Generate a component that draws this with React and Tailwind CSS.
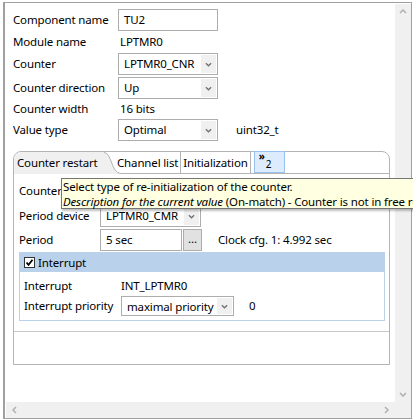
import React from 'react';

const font = { fontFamily: '"Noto Sans", "Open Sans", sans-serif' };

function Chevron({ dir = 'down', className = '' }) {
  // small arrow glyph used by combos and scrollbars
  const paths = {
    down: 'M1 1 L4 4 L7 1',
    up: 'M1 4 L4 1 L7 4',
    left: 'M4 1 L1 4 L4 7',
    right: 'M1 1 L4 4 L1 7',
  };
  const box = dir === 'left' || dir === 'right' ? '0 0 5 8' : '0 0 8 5';
  return (
    <svg viewBox={box} className={className} fill="none" stroke="currentColor" strokeWidth="1.5">
      <path d={paths[dir]} />
    </svg>
  );
}

function Combo({ value, width }) {
  return (
    <div className={`flex h-full border border-[#adadad] bg-white ${width}`}>
      <div className="flex-1 pl-[5px] leading-[20px] whitespace-nowrap overflow-hidden">{value}</div>
      <div className="w-[15px] my-[1px] mr-[1px] flex items-center justify-center bg-[#f0f0f0] text-[#707070]">
        <Chevron className="w-[7px] h-[5px]" />
      </div>
    </div>
  );
}

function Row({ label, labelW, children, h = 'h-[22px]', className = '' }) {
  return (
    <div className={`flex items-center ${h} ${className}`}>
      <div className={`${labelW} shrink-0 whitespace-nowrap`}>{label}</div>
      {children}
    </div>
  );
}

export default function App() {
  return (
    <div className="relative w-[413px] h-[420px] bg-white overflow-hidden text-[11.5px] tracking-[-0.15px] text-black" style={font}>
      <div className="ml-[3px] mt-[2px] w-[409px] h-[417px] border border-[#a0a0a0] border-l-2 flex flex-col">
        <div className="flex flex-1 min-h-0">
          {/* scrolled content */}
          <div className="flex-1 pl-[8px] pt-[6px]">
            <Row label="Component name" labelW="w-[105px]">
              <div className="w-[100px] h-full border border-[#adadad] pl-[5px] leading-[20px]">TU2</div>
            </Row>
            <Row label="Module name" labelW="w-[105px]">
              <div className="pl-[2px]">LPTMR0</div>
            </Row>
            <Row label="Counter" labelW="w-[105px]">
              <Combo value="LPTMR0_CNR" width="w-[100px]" />
            </Row>
            <Row label="Counter direction" labelW="w-[105px]" className="mt-[2px]">
              <Combo value="Up" width="w-[100px]" />
            </Row>
            <Row label="Counter width" labelW="w-[105px]" h="h-[20px]">
              <div className="pl-[2px]">16 bits</div>
            </Row>
            <Row label="Value type" labelW="w-[105px]">
              <Combo value="Optimal" width="w-[100px]" />
              <div className="ml-[18px]">uint32_t</div>
            </Row>

            {/* tab folder */}
            <div className="mt-[10px] w-[377px] h-[214px] flex flex-col border border-[#b4b4b4] rounded-tl-[8px] rounded-tr-[8px]">
              <div className="flex h-[22px] shrink-0">
                <div className="relative w-[90px] bg-[#f0f0f0] rounded-tl-[7px] pl-[3px] leading-[21px] whitespace-nowrap">
                  Counter restart
                  <svg className="absolute right-[-17px] top-0 w-[17px] h-[22px]" viewBox="0 0 17 22">
                    <path d="M0 0 C8 0 7 21 17 21 L17 22 L0 22 Z" fill="#f0f0f0" />
                    <path d="M0 0.5 C8 0.5 7 21.5 17 21.5" fill="none" stroke="#b4b4b4" strokeWidth="1" />
                  </svg>
                </div>
                <div className="flex flex-1 border-b border-[#b4b4b4]">
                  <div className="pl-[13px] pr-[2px] leading-[21px] border-r border-[#b4b4b4] whitespace-nowrap">Channel list</div>
                  <div className="px-[2px] leading-[21px] border-r border-[#b4b4b4] whitespace-nowrap">Initialization</div>
                  <div className="ml-[3px] w-[31px] h-[22px] -mt-px bg-[#dcecfc] border border-[#99c2ee] relative">
                    <span className="absolute left-[4px] top-[-3px] text-[10px] font-bold">»</span>
                    <span className="absolute left-[11px] top-[5px] text-[10px]">2</span>
                  </div>
                </div>
              </div>

              <div className="flex-1 flex flex-col">
                <div className="pl-[5px] pt-[6px]">
                  <Row label="Counter" labelW="w-[81px]" h="h-[22px]">
                    <Combo value="On-match" width="w-[101px]" />
                  </Row>
                  <Row label="Period device" labelW="w-[81px]" className="mt-[3px]">
                    <Combo value="LPTMR0_CMR" width="w-[101px]" />
                  </Row>
                  <Row label="Period" labelW="w-[81px]" className="mt-[2px]">
                    <div className="w-[82px] h-full border border-[#adadad] pl-[5px] leading-[20px]">5 sec</div>
                    <div className="ml-[1px] w-[19px] h-full bg-[#e1e1e1] border border-[#adadad] text-center leading-[18px]">...</div>
                    <div className="ml-[16px]">Clock cfg. 1: 4.992 sec</div>
                  </Row>

                  <div className="mt-[1px] w-[366px] border border-[#b9d1ea]">
                    <div className="h-[19px] bg-[#b9d1ea] flex items-center pl-[4px]">
                      <div className="w-[11px] h-[11px] border border-[#333] bg-white flex items-center justify-center">
                        <svg viewBox="0 0 9 9" className="w-[9px] h-[9px]">
                          <path d="M1.5 4.5 L3.5 6.8 L7.5 1.8" fill="none" stroke="#000" strokeWidth="1.8" />
                        </svg>
                      </div>
                      <span className="ml-[3px]">Interrupt</span>
                    </div>
                    <div className="pl-[4px] pt-[4px] pb-[4px]">
                      <Row label="Interrupt" labelW="w-[97px]" h="h-[20px]">
                        <div>INT_LPTMR0</div>
                      </Row>
                      <Row label="Interrupt priority" labelW="w-[97px]" h="h-[20px]">
                        <Combo value="maximal priority" width="w-[113px]" />
                        <div className="ml-[15px]">0</div>
                      </Row>
                    </div>
                  </div>
                </div>
                <div className="mt-[10px] border-t border-[#c8c8c8]" />
              </div>
            </div>
          </div>

          {/* vertical scrollbar */}
          <div className="w-[16px] mt-[1px] bg-[#f0f0f0] flex flex-col items-center justify-between py-[5px] text-[#b0b0b0]">
            <Chevron dir="up" className="w-[8px] h-[5px]" />
            <Chevron dir="down" className="w-[8px] h-[5px]" />
          </div>
        </div>

        {/* horizontal scrollbar */}
        <div className="flex h-[16px] shrink-0">
          <div className="flex-1 ml-[1px] bg-[#f0f0f0] flex items-center justify-between px-[6px] text-[#b0b0b0]">
            <Chevron dir="left" className="w-[5px] h-[8px]" />
            <Chevron dir="right" className="w-[5px] h-[8px]" />
          </div>
          <div className="w-[16px] bg-[#f0f0f0]" />
        </div>
      </div>

      {/* tooltip */}
      <div className="absolute left-[61px] top-[178px] w-[400px] h-[31px] bg-[#ffffe1] border border-[#767676] shadow-[1px_2px_2px_rgba(0,0,0,0.25)] pl-[1px] leading-[15px] whitespace-nowrap">
        <div>Select type of re-initialization of the counter.</div>
        <div>
          <i>Description for the current value</i> (On-match) - Counter is not in free running mode
        </div>
      </div>
    </div>
  );
}
